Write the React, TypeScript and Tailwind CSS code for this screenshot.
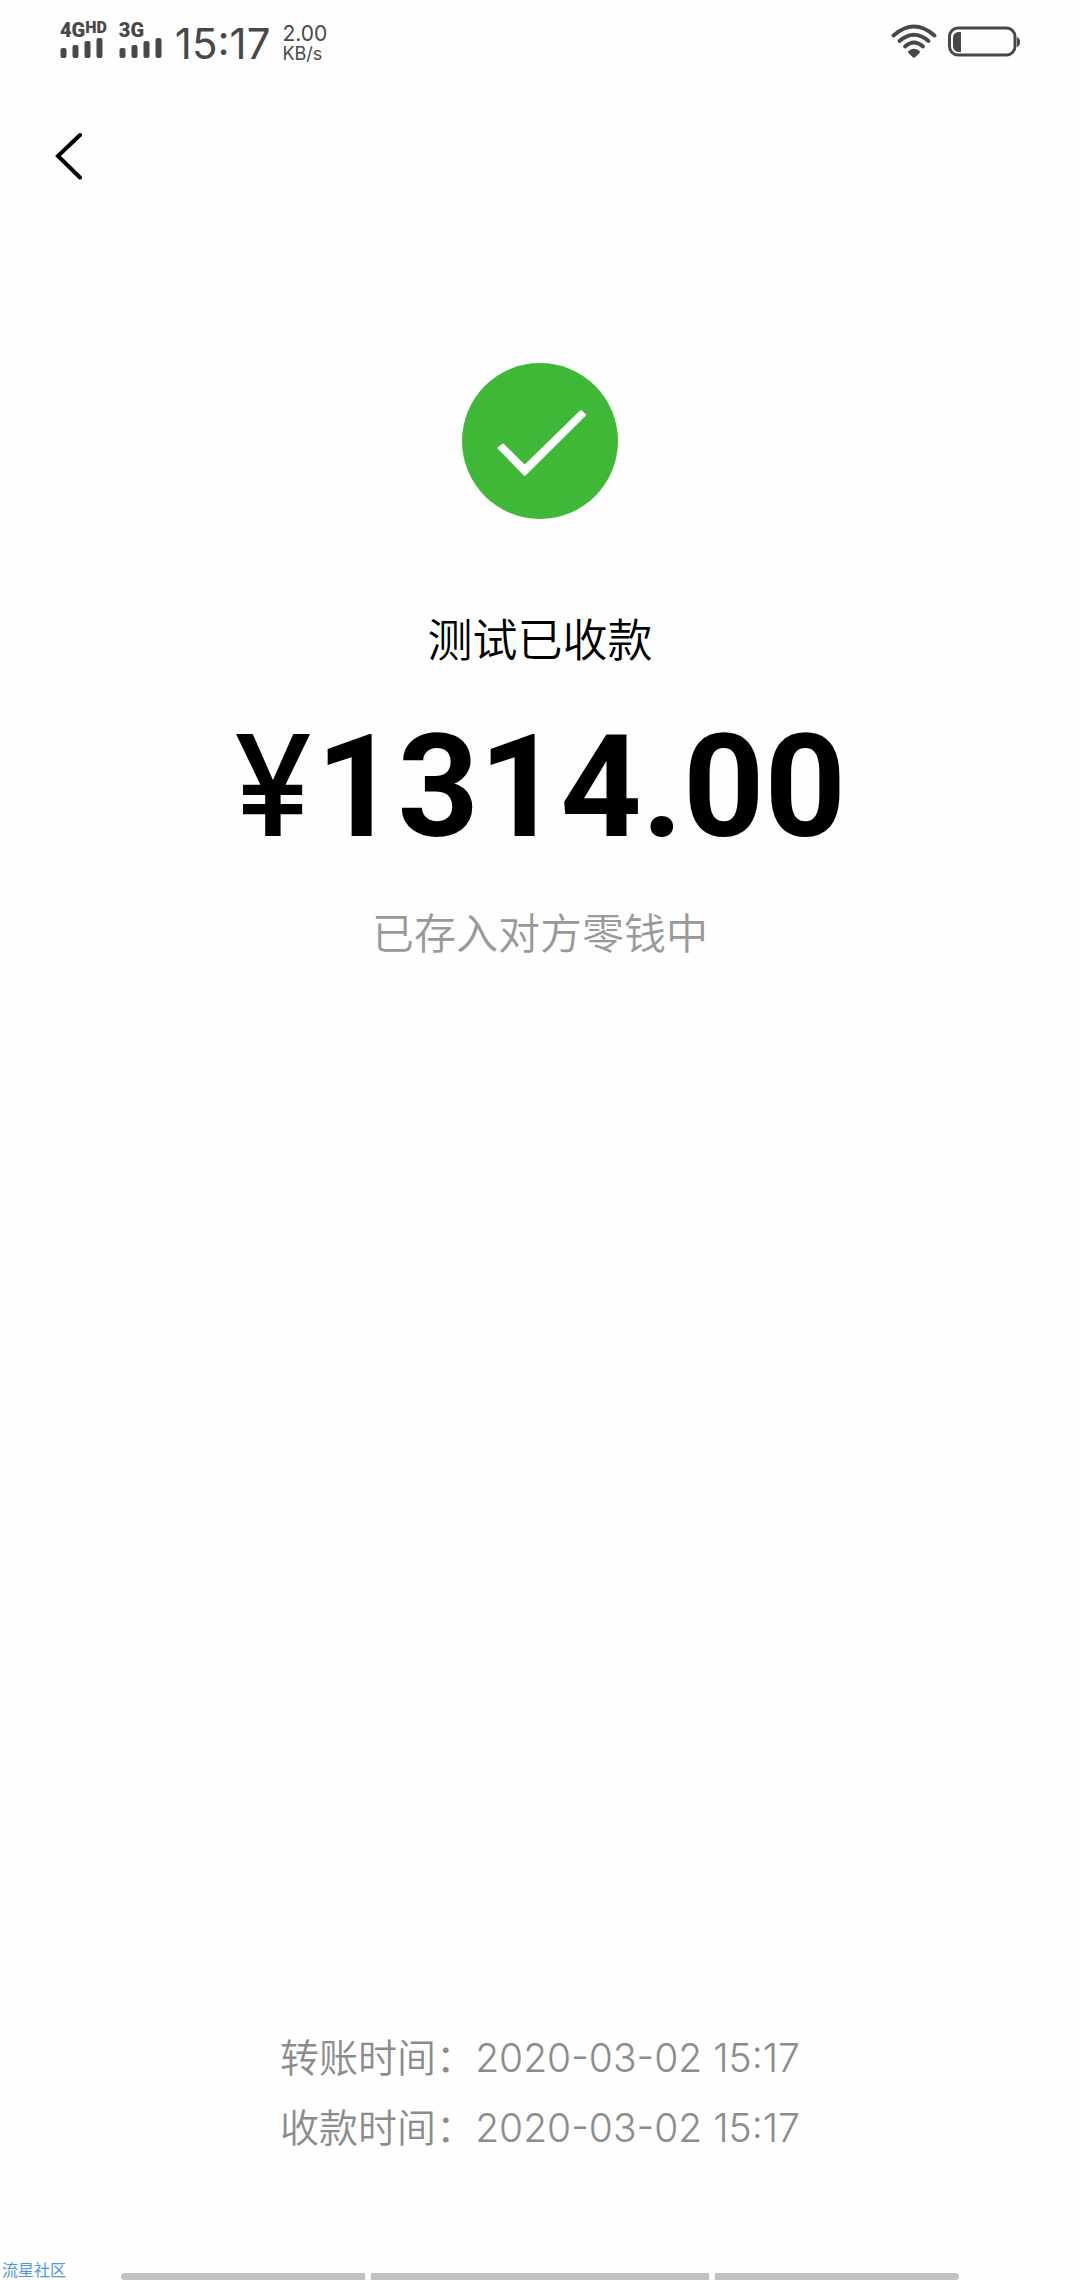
import type { ReactNode } from "react";

const times = [
  { label: "转账时间：", value: "2020-03-02 15:17" },
  { label: "收款时间：", value: "2020-03-02 15:17" },
];

function Signal({ children }: { children: ReactNode }) {
  return (
    <div className="flex flex-col">
      <div className="flex h-4 items-start font-['Roboto',sans-serif] text-[20px] font-black leading-4">
        {children}
      </div>
      <svg className="h-5 w-11" viewBox="0 0 44 20" fill="currentColor">
        <rect x="0.500" y="10" width="6" height="10" rx="2" />
        <rect x="12.500" y="7" width="6" height="13" rx="2" />
        <rect x="24.500" y="3" width="6" height="17" rx="2" />
        <rect x="36.500" y="0" width="6" height="20" rx="2" />
      </svg>
    </div>
  );
}

function WifiIcon() {
  return (
    <svg className="h-9 w-12" viewBox="0 0 48 36" fill="none" stroke="currentColor">
      <g strokeWidth="3.8" strokeLinecap="round">
        <path d="M3.500 11.500Q24 -6.500 44.500 11.500" />
        <path d="M9.500 17Q24 4.500 38.500 17" />
        <path d="M15 22.500Q24 14.500 33 22.500" />
      </g>
      <path
        d="M18.500 27Q24 22.500 29.500 27Q30.500 28 29.500 29L25.500 33Q24 34.500 22.500 33L18.500 29Q17.500 28 18.500 27Z"
        fill="currentColor"
        stroke="none"
      />
    </svg>
  );
}

function BatteryIcon() {
  return (
    <svg className="h-8 w-18" viewBox="0 0 72 32" fill="none">
      <rect x="1.500" y="2" width="65.500" height="27" rx="8.500" stroke="currentColor" strokeWidth="3" />
      <path d="M13 6V26H10Q5 25 5 20V12Q5 7 10 6Z" fill="currentColor" />
      <path d="M69 11Q72 12 72 15.500Q72 20 69 21Z" fill="currentColor" />
    </svg>
  );
}

function StatusBar() {
  return (
    <header className="flex h-20 items-start justify-between px-[60px] pt-[22px] text-[#484848]">
      <div className="flex items-start">
        <Signal>
          4G<span className="text-[16px] leading-3">HD</span>
        </Signal>
        <div className="ml-3">
          <Signal>3G</Signal>
        </div>
        <span className="ml-3 font-['Inter',sans-serif] text-[42px] leading-[44px]">15:17</span>
        <div className="ml-3 flex flex-col pt-0.5 font-['Inter',sans-serif]">
          <span className="text-[21px] leading-5">2.00</span>
          <span className="text-[18px] leading-5">KB/s</span>
        </div>
      </div>
      <div className="flex items-center gap-2.5 pt-0.5">
        <WifiIcon />
        <BatteryIcon />
      </div>
    </header>
  );
}

function App() {
  return (
    <div className="flex min-h-screen flex-col overflow-hidden bg-[#fefefe] font-['Inter','Noto_Sans_CJK_SC',sans-serif]">
      <StatusBar />

      <nav className="flex px-10 pt-12">
        <button type="button" aria-label="返回" className="flex h-14 w-14 items-center justify-center">
          <svg className="h-12 w-8" viewBox="0 0 32 48" fill="none" stroke="#000" strokeWidth="4">
            <path d="M28 3L6 24L28 45.500" strokeLinecap="round" />
          </svg>
        </button>
      </nav>

      <main className="flex flex-1 flex-col items-center pt-[179px]">
        <svg className="h-[156px] w-[156px]" viewBox="0 0 156 156">
          <circle cx="78" cy="78" r="78" fill="#40b837" />
          <path
            d="M36.500 85L41 81.500L62.700 103L119 48L123 52L62.700 112Z"
            fill="#fff"
            stroke="#fff"
            strokeWidth="2"
            strokeLinejoin="round"
          />
        </svg>
        <h1 className="mt-[90px] text-[45px] font-[350] leading-[64px] text-black">测试已收款</h1>
        <p className="mt-8 flex items-baseline gap-1 leading-[160px] text-black">
          <span className="font-['Inter',sans-serif] text-[140px] font-medium">¥</span>
          <span className="font-['Roboto',sans-serif] text-[142px] font-bold">1314.00</span>
        </p>
        <p className="mt-9 text-[42px] font-[350] leading-[60px] text-[#999]">已存入对方零钱中</p>
      </main>

      <dl className="flex flex-col items-center text-[39px] font-[350] leading-[70px] text-[#8c8c8c]">
        {times.map((time) => (
          <div key={time.label} className="flex">
            <dt>{time.label}</dt>
            <dd>{time.value}</dd>
          </div>
        ))}
      </dl>

      <footer className="relative flex h-[117px] items-end gap-1.5 px-[121px]">
        <span className="absolute bottom-0 left-0.5 text-[16px] leading-5 text-[#4c9be0]">流星社区</span>
        <div className="h-[7px] flex-[244] rounded-l-full bg-[#c2c2c2]" />
        <div className="h-[7px] flex-[338] bg-[#c2c2c2]" />
        <div className="h-[7px] flex-[244] rounded-r-full bg-[#c2c2c2]" />
      </footer>
    </div>
  );
}

export default App;
